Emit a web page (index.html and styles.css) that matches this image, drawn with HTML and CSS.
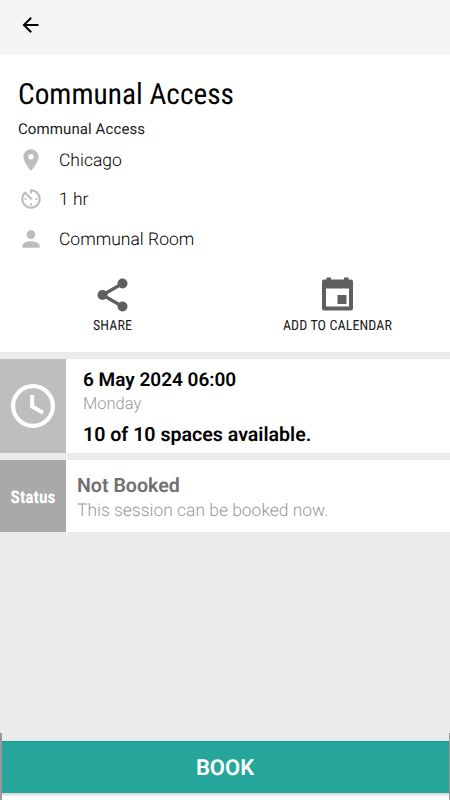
FILE: index.html
```html
<!DOCTYPE html>
<html lang="en">
<head>
<meta charset="utf-8">
<title>Communal Access</title>
<link rel="stylesheet" href="styles.css">
</head>
<body>
<div class="screen">
  <header class="topbar">
    <svg class="back" viewBox="0 0 24 24"><path d="M20 11H7.83l5.59-5.59L12 4l-8 8 8 8 1.41-1.41L7.83 13H20v-2z"/></svg>
  </header>
  <section class="details">
    <h1 class="title">Communal Access</h1>
    <p class="subtitle">Communal Access</p>
    <ul class="facts">
      <li class="fact">
        <svg viewBox="0 0 24 24"><path d="M12 2C8.13 2 5 5.13 5 9c0 5.25 7 13 7 13s7-7.75 7-13c0-3.87-3.13-7-7-7zm0 9.5a2.5 2.5 0 0 1 0-5 2.5 2.5 0 0 1 0 5z"/></svg>
        <span>Chicago</span>
      </li>
      <li class="fact">
        <svg viewBox="0 0 24 24"><path d="M11 17c0 .55.45 1 1 1s1-.45 1-1-.45-1-1-1-1 .45-1 1zm0-14v4h2V5.08c3.39.49 6 3.39 6 6.92 0 3.87-3.13 7-7 7s-7-3.13-7-7c0-1.68.59-3.22 1.58-4.42L12 13l1.41-1.41-6.8-6.8v.02C4.42 6.45 3 9.05 3 12c0 4.97 4.02 9 9 9 4.97 0 9-4.03 9-9s-4.03-9-9-9h-1zm7 9c0-.55-.45-1-1-1s-1 .45-1 1 .45 1 1 1 1-.45 1-1zM6 12c0 .55.45 1 1 1s1-.45 1-1-.45-1-1-1-1 .45-1 1z"/></svg>
        <span>1 hr</span>
      </li>
      <li class="fact">
        <svg viewBox="0 0 24 24"><path d="M12 12c2.21 0 4-1.79 4-4s-1.79-4-4-4-4 1.79-4 4 1.79 4 4 4zm0 2c-2.67 0-8 1.34-8 4v2h16v-2c0-2.66-5.33-4-8-4z"/></svg>
        <span>Communal Room</span>
      </li>
    </ul>
    <div class="actions">
      <div class="action">
        <svg class="share" viewBox="0 0 41 41"><path d="M30.500 9.500L10.500 21l20 11.500"/><circle cx="30.500" cy="9.500" r="5"/><circle cx="10.500" cy="21" r="5"/><circle cx="30.500" cy="32.500" r="5"/></svg>
        <span>SHARE</span>
      </div>
      <div class="action">
        <svg viewBox="0 0 41 41"><path fill-rule="evenodd" d="M9.500 3.500h4.500v2h13v-2h4.500v2h2.500a2 2 0 0 1 2 2v27a2 2 0 0 1-2 2H7a2 2 0 0 1-2-2v-27a2 2 0 0 1 2-2h2.500zM9 14.500v18h23v-18zM20.500 21h9v9h-9z"/></svg>
        <span>ADD TO CALENDAR</span>
      </div>
    </div>
  </section>
  <section class="card session">
    <div class="side clock">
      <svg viewBox="0 0 44 44"><circle cx="22" cy="22" r="19.900"/><path d="M21.200 11v11.500l10.800 6.200"/></svg>
    </div>
    <div class="info">
      <p class="strong date">6 May 2024 06:00</p>
      <p class="muted day">Monday</p>
      <p class="strong spaces">10 of 10 spaces available.</p>
    </div>
  </section>
  <section class="card status">
    <div class="side label"><span>Status</span></div>
    <div class="info">
      <p class="strong state">Not Booked</p>
      <p class="muted note">This session can be booked now.</p>
    </div>
  </section>
  <footer class="bottom">
    <div class="book"><span>BOOK</span></div>
  </footer>
</div>
</body>
</html>
```

FILE: styles.css
```css
* { box-sizing: border-box; margin: 0; padding: 0; }
body { font-family: Roboto, "Liberation Sans", sans-serif; color: #000; text-rendering: geometricPrecision; }
.screen { width: 450px; height: 800px; display: flex; flex-direction: column; background: #ebebeb; overflow: hidden; }
.topbar { height: 55px; flex: none; background: #f5f5f5; padding: 13px 0 0 18px; }
.back { display: block; width: 25px; height: 24px; }
.details { height: 297px; flex: none; background: #fff; padding: 22px 0 0 18px; }
.title { font: 400 29.3px/36px "Roboto Condensed", Roboto, sans-serif; font-stretch: 75%; letter-spacing: .02px; white-space: nowrap; }
.subtitle { font-size: 15px; line-height: 20px; margin-top: 6px; letter-spacing: .1px; color: #1c1c1c; }
.facts { list-style: none; padding-top: 1px; }
.fact { display: flex; align-items: center; height: 39.5px; font-size: 17.5px; font-weight: 300; }
.fact span { padding-top: 2px; }
.fact svg { width: 26px; height: 26px; fill: #bdbdbd; margin-right: 15px; }
.actions { display: flex; margin: 15px 0 0 -18px; }
.action { width: 225px; display: flex; flex-direction: column; align-items: center; font: 400 14px/18px "Roboto Condensed", Roboto, sans-serif; font-stretch: 75%; letter-spacing: .12px; color: #1c1c1c; }
.action svg { width: 41px; height: 41px; fill: #5f5f5f; margin-bottom: 2px; }
.share path { fill: none; stroke: #5f5f5f; stroke-width: 3.2; }
.card { display: flex; flex: none; margin-top: 7px; background: #fff; white-space: nowrap; }
.session { height: 94px; }
.status { height: 72px; }
.side { width: 66px; display: flex; align-items: center; justify-content: center; }
.clock { background: #bebebe; }
.clock svg { width: 44px; height: 44px; fill: none; stroke: #fff; stroke-width: 4.2; }
.clock path { stroke-width: 4; }
.label { background: #a9a9a9; color: #fff; font: 700 17.5px/24px "Roboto Condensed", Roboto, sans-serif; font-stretch: 75%; padding-top: 3px; }
.strong { font-size: 19px; font-weight: 600; line-height: 24px; }
.muted { font-size: 16.5px; font-weight: 300; line-height: 24px; color: #999; }
.session .info { padding: 9px 0 0 17px; }
.day { padding-top: 1px; }
.spaces { margin-top: 6px; font-size: 19.6px; }
.status .info { padding: 14px 0 0 11px; }
.state { color: #707070; font-size: 19.6px; }
.note { font-size: 17.45px; padding-top: 1px; }
.bottom { height: 67px; margin-top: auto; padding-top: 8px; border: solid #999; border-width: 0 1px 0 2px; background: linear-gradient(#ebebeb 60px, #d0d0d0 60px, #fff 64px); }
.book { height: 52px; background: #26a69a; border-top: 1px solid #16978b; color: #fff; display: flex; align-items: center; justify-content: center; font-size: 22px; font-weight: 600; padding-top: 1px; }
.book span { margin-right: 1px; }
```
